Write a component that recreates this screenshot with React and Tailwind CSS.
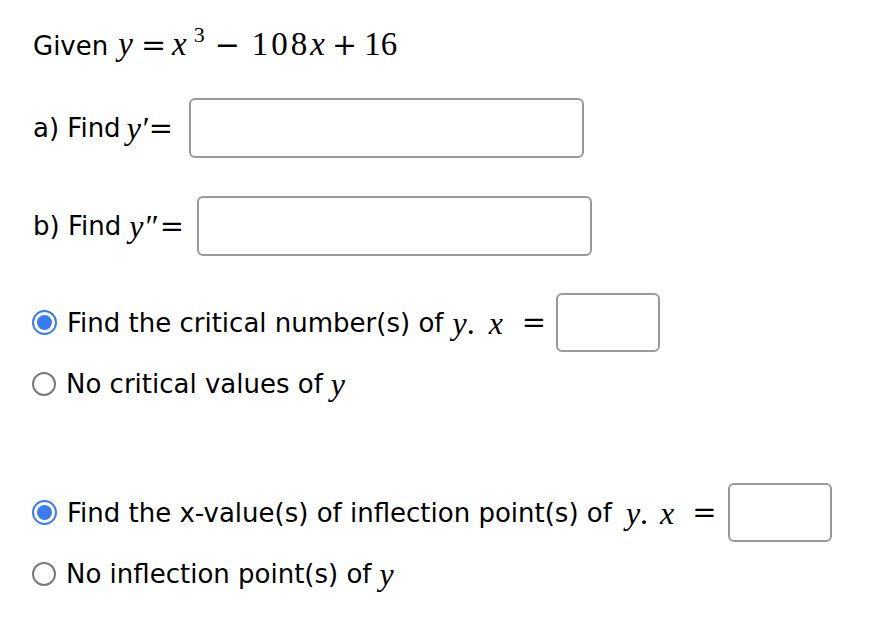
import React from "react";

const M = ({ children, className = "" }) => (
  <span className={"font-['Liberation_Serif',serif] italic " + className}>{children}</span>
);
const N = ({ children, className = "" }) => (
  <span className={"font-['Liberation_Serif',serif] " + className}>{children}</span>
);
const Op = ({ children, className = "" }) => (
  <span className={"font-['DejaVu_Serif',serif] text-[29px] " + className}>{children}</span>
);

const Radio = ({ checked }) =>
  checked ? (
    <span className="inline-flex w-[25px] h-[25px] rounded-full border-[2px] border-[#3a7bf0] items-center justify-center shrink-0">
      <span className="w-[15px] h-[15px] rounded-full bg-[#3a7bf0]" />
    </span>
  ) : (
    <span className="inline-block w-[24px] h-[24px] rounded-full border-[2px] border-[#7a7a7a] bg-white shrink-0" />
  );

const Box = ({ className = "" }) => (
  <span className={"h-[59px] rounded-[6px] border-[2px] border-[#999] bg-white shrink-0 " + className} />
);

export default function App() {
  return (
    <div className="w-[884px] h-[634px] bg-white text-black font-['DejaVu_Sans',sans-serif] text-[26px] leading-none">
      <div className="pl-[33px] pt-[28px]">
        <div className="flex items-baseline h-[32px]">
          <span>Given</span>
          <M className="ml-[10px] text-[33px]">y</M>
          <Op className="ml-[8px] text-[30px]">=</Op>
          <M className="ml-[6px] text-[33px]">x</M>
          <N className="ml-[7px] text-[22px] relative -top-[13px]">3</N>
          <Op className="ml-[10px] text-[30px]">−</Op>
          <N className="ml-[12px] text-[33px] tracking-[3px]">108</N>
          <M className="text-[33px]">x</M>
          <Op className="ml-[7px] text-[30px]">+</Op>
          <N className="ml-[7px] text-[33px]">16</N>
        </div>

        <div className="flex items-center mt-[38px]">
          <span>a) Find</span>
          <M className="ml-[6px] text-[32px]">y′</M>
          <Op className="ml-[1px]">=</Op>
          <Box className="ml-[16px] w-[395px] h-[60px]" />
        </div>

        <div className="flex items-center mt-[38px]">
          <span>b) Find</span>
          <M className="ml-[8px] text-[32px]">y″</M>
          <Op className="ml-[3px]">=</Op>
          <Box className="ml-[13px] w-[395px] h-[60px]" />
        </div>

        <div className="flex items-center mt-[37px] -ml-[1px]">
          <Radio checked />
          <span className="ml-[10px]">Find the critical number(s) of</span>
          <M className="ml-[9px] text-[32px]">y</M>
          <N className="text-[32px]">.</N>
          <M className="ml-[14px] text-[32px]">x</M>
          <Op className="ml-[19px]">=</Op>
          <Box className="ml-[10px] w-[104px]" />
        </div>

        <div className="flex items-center mt-[16px] -ml-[1px]">
          <Radio />
          <span className="ml-[10px]">No critical values of</span>
          <M className="ml-[8px] text-[32px]">y</M>
        </div>

        <div className="flex items-center mt-[83px] -ml-[1px]">
          <Radio checked />
          <span className="ml-[10px]">Find the x-value(s) of inflection point(s) of</span>
          <M className="ml-[14px] text-[32px]">y</M>
          <N className="text-[32px]">.</N>
          <M className="ml-[12px] text-[32px]">x</M>
          <Op className="ml-[18px]">=</Op>
          <Box className="ml-[11px] w-[104px]" />
        </div>

        <div className="flex items-center mt-[16px] -ml-[1px]">
          <Radio />
          <span className="ml-[10px]">No inflection point(s) of</span>
          <M className="ml-[8px] text-[32px]">y</M>
        </div>
      </div>
    </div>
  );
}
